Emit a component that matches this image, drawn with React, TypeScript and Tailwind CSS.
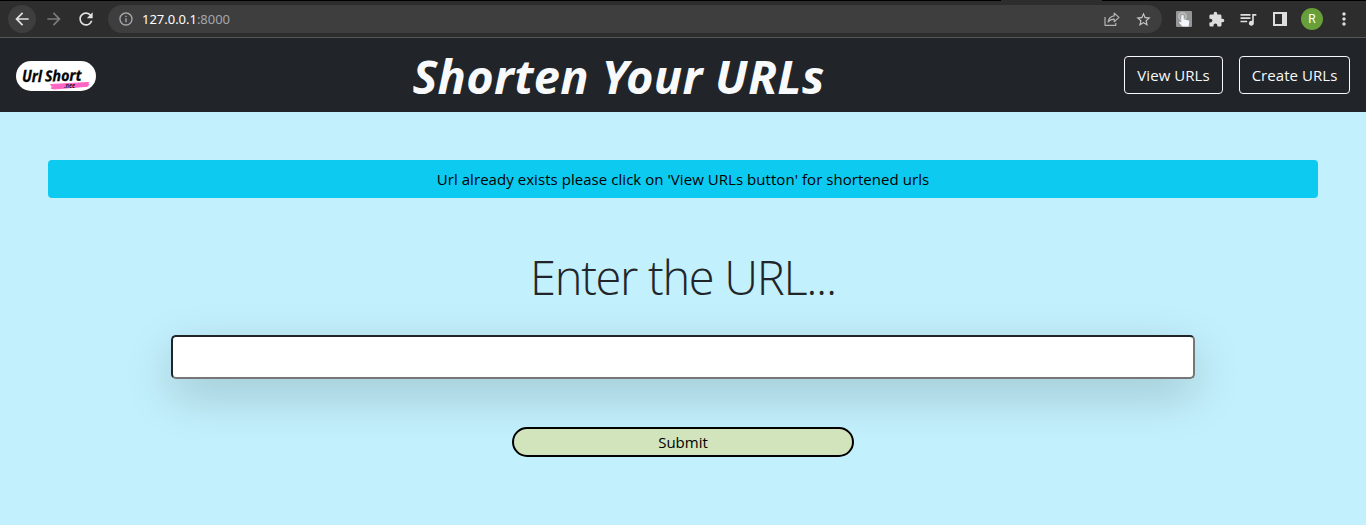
import React from "react";
import {
  MdArrowBack,
  MdArrowForward,
  MdRefresh,
  MdInfoOutline,
  MdStarBorder,
  MdExtension,
  MdQueueMusic,
  MdMoreVert,
} from "react-icons/md";

function ShareIcon() {
  return (
    <svg width="16" height="16" viewBox="0 0 16 16" fill="none" stroke="#b4b4b4" strokeWidth="1.2" strokeLinejoin="round">
      <path d="M1 6v8.300h10.800v-2.400" />
      <path d="M10.200 2.200 15 6.400l-4.800 4.300V8.200C7.400 8.200 5.600 9.100 4.100 11c.5-3.300 2.600-5.700 6.100-6.200z" />
    </svg>
  );
}

function TapIcon() {
  return (
    <svg width="16" height="16" viewBox="0 0 16 16">
      <rect width="16" height="16" rx="1" fill="#969696" />
      <circle cx="6.500" cy="5.500" r="4.500" fill="#b9b9b9" />
      <circle cx="6.500" cy="5.500" r="2.800" fill="#a2a2a2" />
      <path
        d="M5.300 5.200a1.200 1.200 0 0 1 2.400 0v3.300l4.200.8c1 .2 1.500.8 1.300 1.800l-.6 4.400H6.500l-3.400-3.800c-.4-.6.300-1.300 1-1l1.200.7z"
        fill="#f3f6fb"
      />
    </svg>
  );
}

function SidePanelIcon() {
  return (
    <svg width="14" height="14" viewBox="0 0 14 14">
      <path fill="#dedede" fillRule="evenodd" d="M0 0h14v14H0zM2 2v10h7V2z" />
    </svg>
  );
}

function Logo() {
  return (
    <svg width="80" height="30" viewBox="0 0 80 30" role="img" aria-label="Url Short" className="mt-0.5">
      <rect width="80" height="30" rx="15" fill="#fff" />
      <path d="M34.500 23.500 73 21.500l-2 1 2 .8-1.500 2L38 28l-3-.8 1.500-1.200z" fill="#ff66c4" stroke="#ff66c4" />
      <g fontFamily="'Open Sans', sans-serif" fontStyle="italic" fontWeight="700" fill="#050505">
        <text x="6" y="20.500" fontSize="15.500" textLength="20" lengthAdjust="spacingAndGlyphs" stroke="#050505" strokeWidth="0.3">
          Url
        </text>
        <text
          x="29"
          y="20.500"
          fontSize="15"
          textLength="36.500"
          lengthAdjust="spacingAndGlyphs"
          stroke="#050505"
          strokeWidth="0.3"
          transform="rotate(-1.500 29 20)"
        >
          Short
        </text>
        <text x="48" y="27" fontSize="6.500" fontWeight="600" textLength="11" lengthAdjust="spacingAndGlyphs">
          .nee
        </text>
      </g>
    </svg>
  );
}

function BrowserBar() {
  return (
    <div className="flex h-[38px] flex-col border-b border-[#555759] bg-[#2d2d2d]">
      <div className="flex h-px shrink-0 justify-between">
        <div className="w-[1001px] bg-black" />
        <div className="w-[264px] bg-black" />
      </div>
      <div className="flex h-9 items-center pl-2">
        <div className="flex size-7 items-center justify-center rounded-full bg-[#3e3e3e]">
          <MdArrowBack size={20} color="#e2e2e2" />
        </div>
        <MdArrowForward size={20} color="#7b7b7b" className="ml-2" />
        <MdRefresh size={20} color="#e2e2e2" className="ml-3" />
        <div className="ml-3 flex h-7 w-[1054px] items-center rounded-full bg-[#3e3e3e] pr-2.5 pl-2.5">
          <MdInfoOutline size={16} color="#a6a9ad" />
          <div className="ml-2 font-['Noto_Sans','Open_Sans',sans-serif] text-[13px] leading-none tracking-[-0.02px] text-[#a4a7aa]">
            <span className="text-white">127.0.0.1</span>:8000
          </div>
          <div className="ml-auto flex items-center gap-[15px]">
            <ShareIcon />
            <MdStarBorder size={17} color="#c9c9c9" />
          </div>
        </div>
        <div className="ml-3.5 flex">
          <TapIcon />
        </div>
        <MdExtension size={17} color="#dedede" className="ml-4" />
        <MdQueueMusic size={20} color="#dedede" className="ml-[13px]" />
        <div className="ml-[15px] flex">
          <SidePanelIcon />
        </div>
        <div className="ml-[14px] flex size-[22px] items-center justify-center rounded-full bg-[#689f38] font-[Roboto,sans-serif] text-[12px] text-white">
          R
        </div>
        <MdMoreVert size={20} color="#dedede" className="ml-[11px]" />
      </div>
    </div>
  );
}

function NavButton({ children, className }: { children: React.ReactNode; className: string }) {
  return (
    <button
      className={`h-[38px] rounded border border-[#f8f9fa] text-center text-[15px] tracking-[0.05px] whitespace-nowrap text-[#f8f9fa] ${className}`}
    >
      {children}
    </button>
  );
}

export default function App() {
  return (
    <div className="h-[525px] overflow-hidden bg-[#c2f0fc] font-['Open_Sans','Noto_Sans',sans-serif] text-[#212529]">
      <BrowserBar />
      <header className="flex h-[74px] items-center justify-between bg-[#212529] px-4">
        <Logo />
        <h1 className="ml-[17px] flex w-[412px] justify-center pt-0.5 font-['Noto_Sans','Open_Sans',sans-serif] text-[47px] leading-none font-bold tracking-[0.3px] whitespace-nowrap text-[#f8f9fa] italic">
          Shorten Your URLs
        </h1>
        <div className="flex gap-4">
          <NavButton className="w-[99px]">View URLs</NavButton>
          <NavButton className="w-[111px]">Create URLs</NavButton>
        </div>
      </header>
      <main className="flex flex-col items-center px-12 pt-12">
        <div className="flex h-[38px] w-full items-center justify-center rounded bg-[#0dcaf0] text-[15px] tracking-[0.05px] text-black">
          <span>Url already exists please click on 'View URLs button' for shortened urls</span>
        </div>
        <h2 className="mt-[50px] flex h-[58px] items-center text-[47px] leading-none font-light tracking-[-1.3px] whitespace-nowrap">
          Enter the URL...
        </h2>
        <input
          aria-label="URL"
          className="mt-[29px] h-11 w-[1024px] rounded-[5px] border-2 border-t-[#212529] border-r-[#767676] border-b-[#767676] border-l-[#212529] bg-white px-2 shadow-[0_16px_48px_rgba(0,0,0,0.175)] outline-none"
        />
        <button className="mt-12 flex h-[30px] w-[342px] items-center justify-center rounded-full border-2 border-black bg-[#d1e4bc] text-[15px] text-black">
          Submit
        </button>
      </main>
    </div>
  );
}
